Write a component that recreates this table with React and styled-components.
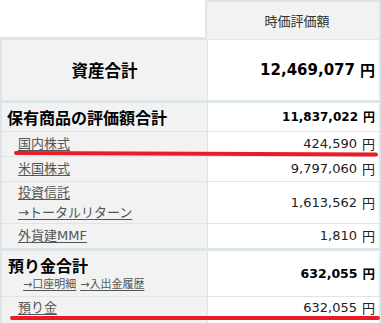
import React from "react";
import styled, { createGlobalStyle } from "styled-components";

const B = "#dce5e9";

const Global = createGlobalStyle`
  html, body { margin: 0; padding: 0; background: #fff; }
  body { font-family: "DejaVu Sans", "Noto Sans CJK JP", sans-serif; }
`;

const Page = styled.div`
  position: relative;
  width: 381px;
  font-family: "DejaVu Sans", "Noto Sans CJK JP", sans-serif;
`;

const HeaderRow = styled.div`
  display: grid;
  grid-template-columns: 205px 176px;
`;

const HeaderBlank = styled.div`
  height: 37px;
  border-bottom: 3px solid ${B};
  background: #fff;
`;

const HeaderCell = styled.div`
  height: 37px;
  border: 2px solid ${B};
  border-bottom-width: 1px;
  background: #f2f2f2;
  display: flex;
  align-items: center;
  justify-content: center;
  padding-left: 8px;
  font-size: 13px;
  color: #333;
`;

const Row = styled.div`
  display: grid;
  grid-template-columns: 206px 1fr;
  height: ${(p) => p.$h}px;
  border-left: 2px solid ${B};
  border-right: 2px solid ${B};
  border-top: ${(p) => (p.$section ? `3px solid ${B}` : "none")};
  border-bottom: ${(p) => (p.$last ? "none" : `1px solid ${B}`)};
`;

const Label = styled.div`
  background: #f2f2f2;
  border-right: 1px solid ${B};
  display: flex;
  flex-direction: column;
  justify-content: ${(p) => (p.$top ? "flex-start" : "center")};
  align-items: ${(p) => (p.$center ? "center" : "flex-start")};
  padding-left: ${(p) => (p.$center ? 0 : p.$indent)}px;
`;

const Value = styled.div`
  display: flex;
  align-items: ${(p) => (p.$top ? "flex-start" : "center")};
  justify-content: flex-end;
  padding-right: 4px;
  font-size: ${(p) => p.$size}px;
  font-weight: ${(p) => (p.$bold ? 700 : 400)};
  line-height: 22px;
  color: ${(p) => (p.$bold ? "#000" : "#222")};
  white-space: nowrap;
`;

const Yen = styled.span`
  margin-left: ${(p) => (p.$gap ? p.$gap : 5)}px;
  font-family: "Noto Sans CJK JP", sans-serif;
`;

const Title = styled.div`
  font-size: ${(p) => p.$size}px;
  font-weight: 700;
  color: #000;
  line-height: ${(p) => p.$lh || 22}px;
  font-family: "Noto Sans CJK JP", sans-serif;
`;

const Link = styled.a`
  display: block;
  font-size: ${(p) => p.$size || 13}px;
  line-height: ${(p) => p.$lh || 20}px;
  color: #555;
  text-decoration: underline;
  text-underline-offset: 2px;
  text-decoration-thickness: 1px;
  cursor: pointer;
`;

const LinkLine = styled.div`
  display: flex;
  gap: 4px;
  padding-left: 15px;
`;

const Overlay = styled.svg`
  position: absolute;
  left: 0;
  top: 0;
  pointer-events: none;
`;

const Amount = ({ n, size, bold, gap, top }) => (
  <Value $size={size} $bold={bold} $top={top}>
    {n}
    <Yen $gap={gap}>円</Yen>
  </Value>
);

export default function App() {
  return (
    <>
      <Global />
      <Page>
        <HeaderRow>
          <HeaderBlank />
          <HeaderCell>時価評価額</HeaderCell>
        </HeaderRow>

        <Row $h={60} $last>
          <Label $center>
            <Title $size={16.5}>資産合計</Title>
          </Label>
          <Amount n="12,469,077" size={15} bold gap={5} />
        </Row>

        <Row $h={28} $section>
          <Label $indent={5}>
            <Title $size={16}>保有商品の評価額合計</Title>
          </Label>
          <Amount n="11,837,022" size={12} bold gap={5} />
        </Row>

        <Row $h={24}>
          <Label $indent={16}>
            <Link>国内株式</Link>
          </Label>
          <Amount n="424,590" size={13} gap={5} />
        </Row>

        <Row $h={24}>
          <Label $indent={16}>
            <Link>米国株式</Link>
          </Label>
          <Amount n="9,797,060" size={13} gap={5} />
        </Row>

        <Row $h={41}>
          <Label $indent={16}>
            <Link>投資信託</Link>
            <Link>→トータルリターン</Link>
          </Label>
          <Amount n="1,613,562" size={13} gap={5} />
        </Row>

        <Row $h={24} $last>
          <Label $indent={16}>
            <Link>外貨建MMF</Link>
          </Label>
          <Amount n="1,810" size={13} gap={5} />
        </Row>

        <Row $h={45} $section>
          <Label $indent={6}>
            <Title $size={16}>預り金合計</Title>
            <LinkLine>
              <Link $size={11} $lh={18}>→口座明細</Link>
              <Link $size={11} $lh={18}>→入出金履歴</Link>
            </LinkLine>
          </Label>
          <Amount n="632,055" size={12.5} bold gap={5} />
        </Row>

        <Row $h={30} $last>
          <Label $indent={16} $top>
            <Link $lh={22}>預り金</Link>
          </Label>
          <Amount n="632,055" size={13} gap={5} top />
        </Row>

        <Overlay width="381" height="323" viewBox="0 0 381 323">
          <line x1="16" y1="153" x2="376" y2="154.5" stroke="#ec1c24" strokeWidth="4" strokeLinecap="round" />
          <line x1="12" y1="318" x2="378" y2="318" stroke="#ec1c24" strokeWidth="4" strokeLinecap="round" />
        </Overlay>
      </Page>
    </>
  );
}
